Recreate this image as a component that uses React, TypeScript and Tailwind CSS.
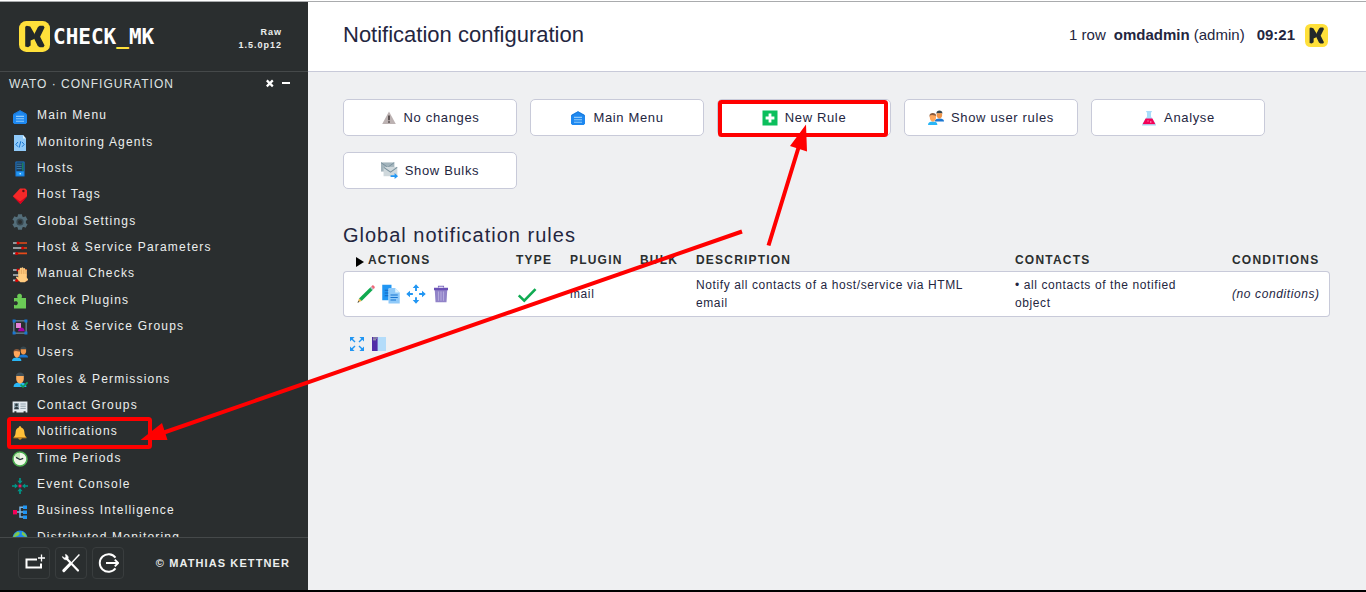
import React from "react";

type IconProps = { children: React.ReactNode; className?: string };

function Svg({ children, className = "size-4" }: IconProps) {
  return (
    <svg viewBox="0 0 16 16" aria-hidden="true" className={"shrink-0 " + className}>
      {children}
    </svg>
  );
}

const HomeIcon = () => (
  <Svg>
    <path d="M8 1.2 14.2 4.6 15 6v7.6L13.8 15H2.2L1 13.6V6l.8-1.4Z" fill="#1e88f0" />
    <path d="M1 6 8 1.8 15 6" fill="none" stroke="#1976d2" strokeWidth="0.8" />
    <path d="M4 7.4h8M4 9.8h8M4 12.2h8" stroke="#90caf9" strokeWidth="1.1" />
  </Svg>
);

const AgentIcon = () => (
  <Svg>
    <path d="M2 0h9l3 3.4V16H2Z" fill="#90caf9" />
    <path d="M11 0v3.4h3Z" fill="#e1f5fe" />
    <path d="M6 7 3.8 9.4 6 11.8M10 7l2.2 2.4L10 11.8M8.8 6.2 7.2 12.6" fill="none" stroke="#1976d2" strokeWidth="1" />
  </Svg>
);

const HostIcon = () => (
  <Svg>
    <rect x="3.4" y="0.5" width="9.2" height="15" rx="0.6" fill="#1976d2" />
    <rect x="4.4" y="1.4" width="7.2" height="8.8" fill="#1b3e5c" />
    <path d="M4.6 3.2h5M4.6 5.4h5M4.6 7.6h5" stroke="#3f7fae" strokeWidth="0.9" />
    <path d="M10.8 1.8v8" stroke="#1fa05a" strokeWidth="0.9" />
    <rect x="4.4" y="10.6" width="7.2" height="4" fill="#2196f3" />
    <circle cx="8.2" cy="12.8" r="0.8" fill="#e3f2fd" />
  </Svg>
);

const TagIcon = () => (
  <Svg>
    <path d="M8 .6h5.2L15 2.2v6L8.4 16 .8 8.2Z" fill="#f52828" />
    <path d="M.8 8.2 8.4 16 15 8.8l-.6 0L8 13.4Z" fill="#d5001f" />
    <circle cx="11.4" cy="3" r="1.2" fill="#5a1518" />
  </Svg>
);

const GearIcon = () => (
  <Svg>
    <g fill="#546e7a">
      <circle cx="8" cy="8" r="6" />
      <path d="M6 .2h4l.4 3H5.600ZM6 15.800h4l.4-3H5.600Z" />
      <path d="m.4 5.700 2-3.400 2.800 1.200-1.900 4ZM15.600 5.700l-2-3.400-2.800 1.200 1.900 4ZM.4 10.300l2 3.400 2.800-1.200-1.900-4ZM15.600 10.300l-2 3.400-2.800-1.200 1.900-4Z" />
    </g>
    <circle cx="8" cy="8" r="3.6" fill="#37474f" />
    <circle cx="8" cy="8" r="2" fill="#2a2e2f" />
  </Svg>
);

const Sliders = () => (
  <>
    <path d="M1 3h5M1 8h9M1 13.4h3" stroke="#b5bdc1" strokeWidth="1.7" />
    <path d="M6 3h9M10 8h5M4 13.4h11" stroke="#e64a19" strokeWidth="1.7" />
    <circle cx="6" cy="3" r="1.5" fill="#d50000" />
    <circle cx="10.6" cy="8" r="1.5" fill="#d50000" />
    <circle cx="4.6" cy="13.4" r="1.5" fill="#d50000" />
  </>
);

const ParamsIcon = () => (
  <Svg>
    <Sliders />
  </Svg>
);

const ManualIcon = () => (
  <Svg>
    <Sliders />
    <path
      d="M6.2 3.4c0-1 1.6-1 1.6 0V1.6c0-1 1.7-1 1.7 0V1c0-1 1.8-1 1.8 0v.8c0-1 1.8-1 1.8 0v1.4c0-.9 1.7-.9 1.7 0v7.4l1.2 1.6c.5.8-.2 1.4-1 1.2l-2.200 1.800H8.400L4.200 11c-.7-1 .5-1.800 1.300-1.200l.7.6Z"
      fill="#ffcc80"
    />
    <path d="M7.8 3v4M9.5 2.4V7M11.3 2.4V7M13.1 3v4" stroke="#d99a52" strokeWidth="0.6" />
  </Svg>
);

const PluginIcon = () => (
  <Svg>
    <path
      d="M2 5h3.6C4.6 3.2 5.4.8 7.6.8s3 2.4 2 4.2H14v10.4H2v-3.6c1.8 1 3.8.2 3.8-1.6S3.800 7.800 2 8.800Z"
      fill="#6bcb56"
    />
  </Svg>
);

const GroupIcon = () => (
  <Svg>
    <rect x="1.8" y="1.8" width="12.4" height="12.4" fill="#2a2e2f" stroke="#5c7480" strokeWidth="1.6" />
    <rect x="4" y="4" width="5" height="5" fill="#e57fd8" />
    <path d="M6 12.200c.4-2.600 2-3.800 3.600-3.800s2.800 1.400 3.200 3.800Z" fill="#aa00a8" />
    <path d="M.6.6h3v3h-3ZM12.400.6h3v3h-3ZM.6 12.400h3v3h-3ZM12.400 12.400h3v3h-3Z" fill="#1976d2" />
  </Svg>
);

const UsersIcon = () => (
  <Svg>
    <path d="M6.800 11.400c0-2.200 1.800-3 4.400-3s4.800.6 4.800 3.200Z" fill="#1976d2" />
    <path d="M8.400 3.600C8.400 1.400 9.600.6 11.400.6s3 .8 3 3Z" fill="#37474f" />
    <path d="M8.700 3.200h5.400v2c0 1.800-1 3.400-2.700 3.400S8.700 7 8.700 5.200Z" fill="#f0954a" />
    <path d="M0 15c0-2.600 2-3.400 4.800-3.400S9.400 12.400 9.400 15Z" fill="#29b6f6" />
    <path d="M1.400 6.400c0-2.400 1.400-3.400 3.400-3.400s3.400 1 3.400 3.400Z" fill="#8a5a3c" />
    <path d="M1.800 5.600 4 5l4 .8v1.800c0 2-1.200 4.200-3.100 4.200S1.800 9.600 1.800 7.600Z" fill="#ffa75c" />
  </Svg>
);

const RolesIcon = () => (
  <Svg>
    <path d="M1.600 15c0-3.400 2.600-4.400 6.400-4.400s6.400 1 6.400 4.400Z" fill="#29b6f6" />
    <path d="M3.800 4.600C3.800 1.600 5.600.6 8 .6s4.200 1 4.200 4Z" fill="#424f56" />
    <path d="M4.200 4h7.600v2.600c0 2.600-1.600 5-3.800 5s-3.800-2.400-3.800-5Z" fill="#ffad5c" />
    <path d="m8.600 12.600 2.400 2.200 4.600-4.400" fill="none" stroke="#0f9d58" strokeWidth="1.700" />
  </Svg>
);

const ContactIcon = () => (
  <Svg>
    <path d="M.6 2.400h14.800v11.200h-1.800v-1.400h-2v1.400H4.400v-1.400h-2v1.400H.6Z" fill="#e4eaf0" />
    <rect x="2" y="4" width="5" height="6.200" fill="#90a4ae" />
    <circle cx="4.500" cy="5.900" r="1.400" fill="#2f3b42" />
    <path d="M2.200 10.200c.2-3.400 4.400-3.400 4.600 0Z" fill="#2f3b42" />
    <path d="M8.400 5h5.400M8.400 7.200h5.400M8.400 9.400h5.400" stroke="#8798a3" strokeWidth="0.900" />
  </Svg>
);

const BellIcon = () => (
  <Svg>
    <path d="M8 1.200c.8 0 1.200.5 1.200 1.200 2.200.6 3 2.400 3.200 4.800.2 2.600.6 3.600 2 5H1.600c1.400-1.400 1.800-2.400 2-5 .2-2.400 1-4.200 3.200-4.800 0-.7.400-1.200 1.200-1.200Z" fill="#ffc038" />
    <path d="M1.600 12.200h12.800l.2 1H1.400Z" fill="#e89a1c" />
    <path d="M6.200 13.200h3.600c-.2 1.800-3.400 1.800-3.600 0Z" fill="#f0a020" />
  </Svg>
);

const ClockIcon = () => (
  <Svg>
    <circle cx="8" cy="8" r="7" fill="#f1f8e9" stroke="#4caf50" strokeWidth="1.500" />
    <path d="M8 8V1.800A6.200 6.200 0 0 0 2.300 5.800Z" fill="#c5e8b7" />
    <path d="M4 6.400 8 8.600l3.200-1.200" fill="none" stroke="#263238" strokeWidth="1.200" />
  </Svg>
);

const EventIcon = () => (
  <Svg>
    <rect x="6.600" y="6.600" width="2.800" height="2.800" fill="#e91e63" />
    <path d="M8 0v4M8 12v4M0 8h4M12 8h4" stroke="#009688" strokeWidth="1.700" />
    <path d="M5.400 2.800h5.200L8 6ZM5.400 13.200h5.200L8 10ZM2.800 5.400v5.200L6 8ZM13.200 5.400v5.200L10 8Z" fill="#009688" />
  </Svg>
);

const BiIcon = () => (
  <Svg>
    <path d="M4 8h7M12 3.200H8V13h4" fill="none" stroke="#78b7e8" strokeWidth="1.500" />
    <rect x="1" y="6" width="4" height="4.400" fill="#f50057" />
    <path d="M11 1.400h4v3.600h-4ZM11 6.400h4V10h-4ZM11 11.400h4V15h-4Z" fill="#2196f3" />
  </Svg>
);

const GlobeIcon = () => (
  <Svg>
    <circle cx="8" cy="8" r="7.400" fill="#1e88f0" />
    <path d="M3 3.600 6 1.400l2 1.600-1.600 2.600-3 1.200-1 3L1 7ZM10 1.600l3 1.800 2 3.600-2.600-.6-2.600-2Z" fill="#7cc84e" />
  </Svg>
);

const WarnIcon = () => (
  <Svg>
    <path d="M8 1.600 14.800 14H1.200Z" fill="#bcb2b2" />
    <path d="M8 5.400v4.800M8 11.200v1.600" stroke="#2b2222" strokeWidth="1.300" />
  </Svg>
);

const PlusIcon = () => (
  <Svg>
    <rect x="0.500" y="0.500" width="15" height="15" fill="#0bbf5c" />
    <path d="M8 3.600v8.800M3.600 8h8.800" stroke="#fff" strokeWidth="2.800" />
  </Svg>
);

const FlaskIcon = () => (
  <Svg>
    <path d="M5.200 1h5.600v1.200H10v4.200l5 8.200H1l5-8.200V2.200h-.8Z" fill="#a8dcfa" />
    <path d="M4.600 8.600h6.800l3 5.600H1.600Z" fill="#f50057" />
    <circle cx="7" cy="11" r="0.700" fill="#ff80ab" />
    <circle cx="9.800" cy="12" r="0.700" fill="#ffc1d8" />
    <path d="M1 15h14" stroke="#8ccbf2" strokeWidth="0.800" />
  </Svg>
);

const BulkIcon = () => (
  <Svg className="size-[17px]">
    <rect x="0" y="0.400" width="12.600" height="8.600" fill="#a3b4bc" />
    <path d="M0 .6 6.400 5l6-4.400" fill="none" stroke="#78909c" strokeWidth="0.900" />
    <rect x="2.400" y="4.600" width="13" height="8.800" fill="#cfd8dc" />
    <path d="M2.600 5 9 9.600 15.200 5" fill="none" stroke="#78909c" strokeWidth="1" />
    <path d="M9 12.400h3.800v-2L16 13.400l-3.200 2.600v-2H9Z" fill="#2196f3" />
  </Svg>
);

const PencilIcon = () => (
  <Svg className="size-5">
    <path d="m2.400 11.500 9.200-8.900 1.900 1.900-9 9.100Z" fill="#0faa50" />
    <path d="m11.200 3 1-1 1.900 1.900-1 1Z" fill="#b0bec5" />
    <path d="m12.200 2 .8-.8c.8-.6 2.500 1 1.900 1.900l-.8.8Z" fill="#f06577" />
    <path d="m2.400 11.500 2.100 2.100-3.200 1.200Z" fill="#e7b04a" />
    <path d="m1.800 13.400.9.900-1.500.6Z" fill="#37474f" />
  </Svg>
);

const CopyIcon = () => (
  <Svg className="size-5">
    <path d="M1 .6h7.400v3L6 4v9H1Z" fill="#2196f3" />
    <path d="M3 5h3M3 7.200h3M3 9.400h3" stroke="#1565c0" strokeWidth="0.800" />
    <path d="M6 3.200h5.400L15 6.800v8.800H6Z" fill="#90caf9" />
    <path d="M11.400 3.200v3.600H15Z" fill="#e1f5fe" />
    <path d="M7.600 8.800h5.800M7.600 10.800h5.800M7.600 12.800h4.400" stroke="#1976d2" strokeWidth="0.900" />
  </Svg>
);

const MoveIcon = () => (
  <Svg className="size-5">
    <path d="M8 1.500v4M8 10.500v4M1.500 8h4M10.500 8h4" stroke="#2196f3" strokeWidth="1.500" />
    <path d="M5.400 3.200 8 .2l2.600 3ZM5.400 12.800 8 15.800l2.600-3ZM3.200 5.400.2 8l3 2.600ZM12.800 5.400 15.800 8l-3 2.600Z" fill="#2196f3" />
  </Svg>
);

const TrashIcon = () => (
  <Svg className="size-5">
    <path d="M3 4.400h10l-.6 10.200H3.600Z" fill="#9183c8" />
    <path d="M6 6v7.400M8 6v7.400M10 6v7.400" stroke="#b3a9dc" strokeWidth="0.900" />
    <path d="M2.400 3h11.200v2H2.400Z" fill="#6a50b5" />
    <path d="M6 2.800V1.800h4v1" fill="none" stroke="#7e6bc0" strokeWidth="0.900" />
  </Svg>
);

const CheckIcon = () => (
  <Svg className="size-[22px]">
    <path d="m2 9 4 3.800L14.200 4.400" fill="none" stroke="#10ab52" strokeWidth="1.900" />
  </Svg>
);

const ExpandIcon = () => (
  <Svg>
    <path d="m2.400 2.400 3.600 3.600M13.600 2.400 10 6M2.400 13.600 6 10M13.600 13.600 10 10" stroke="#2196f3" strokeWidth="1.400" />
    <path d="M1 1h4.600L1 5.600ZM15 1h-4.600L15 5.600ZM1 15h4.600L1 10.400ZM15 15h-4.600l4.600-4.600Z" fill="#2196f3" />
  </Svg>
);

const ColumnsIcon = () => (
  <Svg>
    <rect x="1" y="1" width="14" height="14" fill="#b3dcfa" />
    <rect x="1" y="1" width="5.600" height="14" fill="#512da8" />
    <path d="M2 2h4M2 3.800h3" stroke="#c5e1a5" strokeWidth="0.800" />
  </Svg>
);

function MkLogo({ className }: { className: string }) {
  return (
    <svg viewBox="0 0 32 32" role="img" aria-label="Check_MK" className={"shrink-0 " + className}>
      <rect width="32" height="32" rx="7.500" fill="#ffe03a" />
      <path d="M6.400 6 8 5l3.600.8L15.800 13v5.600L12 20v5.400L9.400 27.200l-3-.8Z" fill="#22282a" />
      <path d="M19.600 6.200 21.400 5h3.800l1.200 1.800-4.600 9.400 4.600 9.200-1.200 1.800h-3.800l-2-1.400-4.200-8.600v-2.600Z" fill="#22282a" />
    </svg>
  );
}

const menu = [
  { label: "Main Menu", Icon: HomeIcon },
  { label: "Monitoring Agents", Icon: AgentIcon },
  { label: "Hosts", Icon: HostIcon },
  { label: "Host Tags", Icon: TagIcon },
  { label: "Global Settings", Icon: GearIcon },
  { label: "Host & Service Parameters", Icon: ParamsIcon },
  { label: "Manual Checks", Icon: ManualIcon },
  { label: "Check Plugins", Icon: PluginIcon },
  { label: "Host & Service Groups", Icon: GroupIcon },
  { label: "Users", Icon: UsersIcon },
  { label: "Roles & Permissions", Icon: RolesIcon },
  { label: "Contact Groups", Icon: ContactIcon },
  { label: "Notifications", Icon: BellIcon },
  { label: "Time Periods", Icon: ClockIcon },
  { label: "Event Console", Icon: EventIcon },
  { label: "Business Intelligence", Icon: BiIcon },
  { label: "Distributed Monitoring", Icon: GlobeIcon },
];

const actions = [
  { label: "No changes", Icon: WarnIcon },
  { label: "Main Menu", Icon: HomeIcon },
  { label: "New Rule", Icon: PlusIcon },
  { label: "Show user rules", Icon: UsersIcon },
  { label: "Analyse", Icon: FlaskIcon },
  { label: "Show Bulks", Icon: BulkIcon },
];

const rowActions = [
  { label: "Edit this rule", Icon: PencilIcon },
  { label: "Clone this rule", Icon: CopyIcon },
  { label: "Move this rule", Icon: MoveIcon },
  { label: "Delete this rule", Icon: TrashIcon },
];

function Sidebar() {
  return (
    <aside className="flex w-[308px] shrink-0 flex-col bg-[#2a2e2f] text-[#eceeee]">
      <div className="flex h-[70px] shrink-0 items-center justify-between border-b border-[#45494a] pr-[26px] pl-[19px]">
        <a href="#home" className="flex items-center gap-[3px]">
          <MkLogo className="size-[31px]" />
          <span className="font-['DejaVu_Sans_Mono',monospace] text-[21px] leading-6 font-bold text-white">
            CHECK<span className="text-[#ffe03a]">_</span>MK
          </span>
        </a>
        <div className="pt-1 text-right text-[9px] leading-[13px] font-bold tracking-[1px]">
          <div>Raw</div>
          <div>1.5.0p12</div>
        </div>
      </div>

      <div className="flex h-6 shrink-0 items-center justify-between pr-[17px] pl-[9px]">
        <h2 className="text-[12px] leading-4 tracking-[1px] text-[#dfe3e3]">WATO · CONFIGURATION</h2>
        <div className="flex gap-[6px]">
          <button type="button" aria-label="Close" className="flex">
            <svg viewBox="0 0 10 10" className="size-[10px]">
              <path d="m1.800 1.400 6 6M7.800 1.400 1.800 7.400" stroke="#fff" strokeWidth="2.200" />
            </svg>
          </button>
          <button type="button" aria-label="Minimize" className="flex">
            <svg viewBox="0 0 10 10" className="size-[10px]">
              <path d="M1 4h8" stroke="#fff" strokeWidth="2" />
            </svg>
          </button>
        </div>
      </div>

      <nav className="min-h-0 flex-1 overflow-hidden pt-[6px]">
        <ul className="grid h-[448px] auto-rows-fr">
          {menu.map(({ label, Icon }) => (
            <li key={label} className="flex">
              <a href="#item" className="flex flex-1 items-center gap-[9px] pl-3 text-[12px] leading-4 tracking-widest">
                <span className="pt-[3px]">
                  <Icon />
                </span>
                {label}
              </a>
            </li>
          ))}
        </ul>
      </nav>

      <div className="flex h-[53px] shrink-0 items-center justify-between border-t border-[#45494a] pr-[18px] pb-0.5 pl-[18px]">
        <div className="flex gap-[5px]">
          <button type="button" aria-label="Add snapin" className="flex size-8 items-center justify-center rounded border border-[#393d3e]">
            <svg viewBox="0 0 22 20" className="h-5 w-[22px]" fill="none" stroke="#fff">
              <path d="M14 6.500H3.500v8h14.500v-4" strokeWidth="2" />
              <path d="M18.500 1.500v7M15 5h7" strokeWidth="1.300" />
            </svg>
          </button>
          <button type="button" aria-label="Edit preferences" className="flex size-8 items-center justify-center rounded border border-[#393d3e]">
            <svg viewBox="0 0 20 20" className="size-5" fill="none" stroke="#fff">
              <path d="M5.500 5.500 17 17.500" strokeWidth="2.200" strokeLinecap="round" />
              <path d="M1.400 3.600C2 6.600 5 7.400 6.600 6.200 8 4.800 7 2 4.400 1.400L5 4 3.800 5Z" fill="#fff" strokeWidth="0.600" />
              <path d="M18.400 1.600 10 10.400" strokeWidth="1.400" />
              <path d="m9.400 10.800-6.600 6.800" strokeWidth="3" strokeLinecap="round" />
            </svg>
          </button>
          <button type="button" aria-label="Log out" className="flex size-8 items-center justify-center rounded border border-[#393d3e]">
            <svg viewBox="0 0 22 20" className="h-5 w-[22px]" fill="none" stroke="#fff" strokeWidth="1.900">
              <path d="M18.500 4.600A8.800 8.800 0 1 0 18.500 15.400" />
              <path d="M9 10h12M17.800 6.600 21.200 10l-3.400 3.400" />
            </svg>
          </button>
        </div>
        <a href="#about" className="text-[11px] leading-4 font-bold tracking-widest">
          © MATHIAS KETTNER
        </a>
      </div>
    </aside>
  );
}

function RulesTable() {
  const head = "pl-[10px] text-left font-bold";
  const cell = "border-y border-[#c8cad9] bg-white py-1 pl-[10px]";
  return (
    <table className="w-full table-fixed border-separate border-spacing-0 text-[12px] leading-[18px]">
      <colgroup>
        <col className="w-[163px]" />
        <col className="w-[54px]" />
        <col className="w-[70px]" />
        <col className="w-[56px]" />
        <col />
        <col className="w-[217px]" />
        <col className="w-[108px]" />
      </colgroup>
      <thead className="tracking-widest text-[#2a2e2f]">
        <tr className="h-[22px]">
          <th className="pl-[13px] text-left font-bold">
            <span className="flex items-center gap-[4px]">
              <svg viewBox="0 0 8 10" className="mt-1 h-[10px] w-2" aria-hidden="true">
                <path d="M0 0 8 5 0 10Z" fill="#000" />
              </svg>
              ACTIONS
            </span>
          </th>
          <th className={head}>TYPE</th>
          <th className={head}>PLUGIN</th>
          <th className={head}>BULK</th>
          <th className={head}>DESCRIPTION</th>
          <th className={head}>CONTACTS</th>
          <th className={head}>CONDITIONS</th>
        </tr>
      </thead>
      <tbody className="tracking-wider">
        <tr>
          <td className="rounded-l border border-r-0 border-[#c8cad9] bg-white py-1 pl-3">
            <div className="flex gap-[5px]">
              {rowActions.map(({ label, Icon }) => (
                <button key={label} type="button" aria-label={label}>
                  <Icon />
                </button>
              ))}
            </div>
          </td>
          <td className={cell}>
            <CheckIcon />
          </td>
          <td className={cell}>mail</td>
          <td className={cell} />
          <td className={cell}>
            <p className="max-w-[290px]">Notify all contacts of a host/service via HTML email</p>
          </td>
          <td className={cell}>
            <p className="max-w-[190px]">• all contacts of the notified object</p>
          </td>
          <td className="rounded-r border border-l-0 border-[#c8cad9] bg-white py-1 pl-[10px] whitespace-nowrap">
            <i>(no conditions)</i>
          </td>
        </tr>
      </tbody>
    </table>
  );
}

function Annotations() {
  return (
    <svg className="pointer-events-none absolute inset-0 size-full" aria-hidden="true">
      <g fill="none" stroke="#ff0000" strokeWidth="4">
        <rect x="9" y="419" width="141" height="28" rx="1.500" />
        <rect x="720" y="102" width="166" height="33" rx="1.500" />
        <path d="M742 231.500 164 432.500M768.500 245.500 799 146" />
      </g>
      <path d="M140.500 440 162 423l5.500 17ZM806 124.500 790 146l17 5.500Z" fill="#ff0000" />
    </svg>
  );
}

export default function App() {
  return (
    <div className="relative flex h-screen flex-col overflow-hidden border-b-2 border-black bg-white font-['Liberation_Sans',Arial,sans-serif] text-[#24263f]">
      <div className="h-0.5 shrink-0 border-b border-[#a9abad]" />
      <div className="flex min-h-0 flex-1">
        <Sidebar />
        <div className="flex min-w-0 flex-1 flex-col bg-[#eff0f2]">
          <header className="flex h-[70px] shrink-0 items-center justify-between border-b border-[#c8cad9] bg-white pr-[38px] pb-[3px] pl-[35px]">
            <h1 className="text-[22px] leading-7">Notification configuration</h1>
            <div className="flex items-center text-[15px] leading-5">
              <span className="mr-2">1 row</span>
              <span className="mr-3">
                <b>omdadmin</b> (admin)
              </span>
              <b className="mr-[10px]">09:21</b>
              <MkLogo className="size-[23px]" />
            </div>
          </header>

          <main className="pt-[27px] pr-9 pl-[35px]">
            <div className="flex flex-wrap gap-x-[13px] gap-y-4">
              {actions.map(({ label, Icon }) => (
                <button
                  key={label}
                  type="button"
                  className="flex h-[37px] w-[174px] items-center justify-center gap-[7px] rounded-[5px] border border-[#c8cad9] bg-white text-[13px] leading-4 tracking-wider"
                >
                  <Icon />
                  {label}
                </button>
              ))}
            </div>

            <h2 className="mt-8 text-[20px] leading-7 tracking-wider">Global notification rules</h2>
            <RulesTable />

            <div className="mt-[19px] flex gap-[6px] pl-[6px]">
              <button type="button" aria-label="Show full screen">
                <ExpandIcon />
              </button>
              <button type="button" aria-label="Toggle columns">
                <ColumnsIcon />
              </button>
            </div>
          </main>
        </div>
      </div>
      <Annotations />
    </div>
  );
}
